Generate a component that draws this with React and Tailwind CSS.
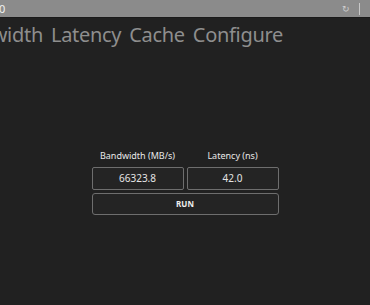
import React from "react";

const font = { fontFamily: '"Noto Sans", "Open Sans", sans-serif' };

const TABS = ["Bandwidth", "Latency", "Cache", "Configure"];

function TitleBar() {
  return (
    <div className="flex h-[17px] items-center justify-between bg-[#8b8b8b] text-[#f2f2f2]">
      <span className="ml-[-1px] text-[11px] leading-none">0</span>
      <div className="flex items-center gap-[9px]">
        <span className="text-[9px] leading-none text-[#cfcfcf]">↻</span>
        <span className="h-[12px] w-px bg-[#c8c8c8]" />
        <span className="w-px" />
      </div>
    </div>
  );
}

function Field({ value }) {
  return (
    <div className="flex h-[23px] items-center justify-center rounded-[2px] border border-[#6e6e6e] bg-[#242424] text-[10px] text-[#e4e4e4]">
      {value}
    </div>
  );
}

export default function App() {
  return (
    <div
      className="flex h-[305px] w-[370px] flex-col overflow-hidden bg-[#212121]"
      style={font}
    >
      <TitleBar />
      <div className="h-px bg-[#1a1a1a]" />
      <nav className="ml-[-56px] mt-[3px] flex gap-[8px] whitespace-nowrap text-[20px] leading-[28px] tracking-[-0.3px] text-[#8e8e8e]">
        {TABS.map((t) => (
          <span key={t}>{t}</span>
        ))}
      </nav>

      <div className="mx-auto mt-[101px] w-[187px]">
        <div className="grid grid-cols-2 gap-x-[3px] text-center text-[9px] text-[#e8e8e8]">
          <span className="leading-[12px]">Bandwidth (MB/s)</span>
          <span className="leading-[12px]">Latency (ns)</span>
        </div>
        <div className="mt-[5px] grid grid-cols-2 gap-x-[3px]">
          <Field value="66323.8" />
          <Field value="42.0" />
        </div>
        <button
          type="button"
          className="mt-[3px] flex h-[22px] w-full items-center justify-center rounded-[3px] border border-[#6e6e6e] bg-[#242424] text-[8px] font-bold text-[#f0f0f0]"
        >
          RUN
        </button>
      </div>
    </div>
  );
}
